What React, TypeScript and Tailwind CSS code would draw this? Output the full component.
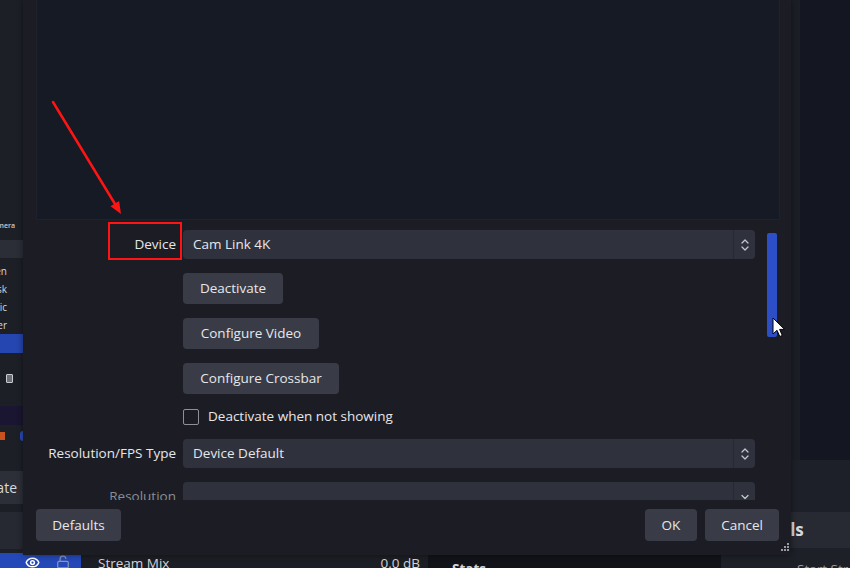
import React from 'react';
import { Eye, LockOpen } from 'lucide-react';

// OBS "Properties for Video Capture Device" dialog over the main window

const UpDown = () => (
  <svg width="10" height="16" viewBox="0 0 10 16" fill="none" stroke="#c4c6cd" strokeWidth="1.3" strokeLinecap="round" strokeLinejoin="round">
    <path d="M2 6 L5 3 L8 6" />
    <path d="M2 10 L5 13 L8 10" />
  </svg>
);

const Down = () => (
  <svg width="10" height="8" viewBox="0 0 10 8" fill="none" stroke="#c4c6cd" strokeWidth="1.3" strokeLinecap="round" strokeLinejoin="round">
    <path d="M2 2.5 L5 5.5 L8 2.5" />
  </svg>
);

const Select = ({ value, down }: { value?: string; down?: boolean }) => (
  <div className="flex h-[29px] w-[572px] shrink-0 rounded-[4px] bg-[#2f323c]">
    <div className="flex flex-1 items-center pl-[10px] text-[13.5px] text-[#e6e7eb]">{value}</div>
    <div className="flex w-[22px] items-center justify-center border-l border-[#272931]">
      {down ? <Down /> : <UpDown />}
    </div>
  </div>
);

const Btn = ({ children, w, h = 'h-[31px]' }: { children: React.ReactNode; w: string; h?: string }) => (
  <div className={`flex ${h} ${w} shrink-0 items-center justify-center rounded-[4px] bg-[#393c47] text-[13.5px] text-[#e6e7eb]`}>
    {children}
  </div>
);

const Row = ({ label, dim, children }: { label?: string; dim?: boolean; children: React.ReactNode }) => (
  <div className="flex items-center">
    <div className={`w-[140px] shrink-0 text-right text-[13.5px] ${dim ? 'text-[#8a8d96]' : 'text-[#e6e7eb]'}`}>{label}</div>
    <div className="ml-[7px] flex">{children}</div>
  </div>
);

const Clip = ({ text }: { text: string }) => (
  <div className="flex justify-end overflow-hidden pr-[16px]">
    <span className="whitespace-nowrap">{text}</span>
  </div>
);

export default function App() {
  return (
    <div className="relative h-[568px] w-[850px] overflow-hidden bg-[#1b1d24] font-['Open_Sans','Noto_Sans',sans-serif]">
      {/* main window behind the dialog */}
      <div className="flex h-full flex-col">
        <div className="flex h-[553px]">
          <div className="flex w-[23px] shrink-0 flex-col bg-[#1d1f27]">
            <div className="h-[212px]" />
            <div className="flex h-[28px] items-center justify-end overflow-hidden pr-[8px]">
              <span className="whitespace-nowrap text-[7px] font-semibold text-[#c9cbd1]">Camera</span>
            </div>
            <div className="h-[18px] bg-[#2b2e37]" />
            <div className="mt-[4px] flex flex-col text-[10px] leading-[18px] text-[#d4d6db]">
              <Clip text="Screen" />
              <Clip text="Desk" />
              <Clip text="Mic" />
              <Clip text="Timer" />
            </div>
            <div className="h-[19px] bg-[#2546b0]" />
            <div className="mt-[18px] flex h-[14px] items-center justify-end pr-[10px]">
              <div className="h-[9px] w-[7px] rounded-[1px] border border-[#c9cbd1] bg-[#6c6f78]" />
            </div>
            <div className="mt-[21px] h-[19px] bg-[#1a1530]" />
            <div className="mt-[5px] flex h-[12px] items-center justify-between">
              <div className="h-[8px] w-[5px] bg-[#c8521c]" />
              <div className="h-[10px] w-[3px] rounded-l-full bg-[#2a4bb5]" />
            </div>
            <div className="mt-[29px] flex h-[33px] items-center justify-end overflow-hidden bg-[#2c2f38]">
              <span className="whitespace-nowrap pr-[6px] text-[14px] text-[#d8d9de]">Deactivate</span>
            </div>
            <div className="mt-[8px] h-[37px] bg-[#262932]" />
          </div>

          <div className="flex-1 bg-[#161a24]" />

          <div className="flex w-[129px] shrink-0 flex-col">
            <div className="flex h-[460px]">
              <div className="w-[70px] bg-[#1d1f27]" />
              <div className="w-[9px] bg-[#1c1e26]" />
              <div className="flex-1 bg-[#141721]" />
            </div>
            <div className="h-[52px] bg-[#1e2029]" />
            <div className="flex h-[36px] items-center bg-[#272a33] pl-[11px]">
              <span className="text-[17px] font-bold text-[#d6d8dd]">Controls</span>
            </div>
            <div className="flex-1 bg-[#1e2029]" />
          </div>
        </div>

        <div className="flex h-[15px] text-[13.5px] leading-[15px]">
          <div className="flex w-[81px] shrink-0 items-start gap-[16px] bg-[#2448b7] pl-[25px] pt-[2px]">
            <Eye size={15} color="#ffffff" strokeWidth={2.4} />
            <LockOpen size={14} color="#8e96b8" strokeWidth={2} />
          </div>
          <div className="w-[9px] shrink-0 bg-[#1b1d24]" />
          <div className="flex w-[338px] shrink-0 bg-[#1c1e25] pl-[8px] pr-[8px] pt-[3px] text-[#d2d4d9]">
            <span>Stream Mix</span>
            <span className="ml-auto">0.0 dB</span>
          </div>
          <div className="w-[293px] shrink-0 bg-[#121319] pl-[24px] pt-[9px] font-bold text-[#d2d4d9]">Stats</div>
          <div className="min-w-0 flex-1 overflow-hidden whitespace-nowrap bg-[#1e2028] pl-[76px] pt-[9px] text-[#9a9ca3]">Start Streaming</div>
        </div>
      </div>

      {/* dialog window */}
      <div className="absolute left-[23px] top-0 flex h-[555px] w-[768px] flex-col bg-[#1c1d24] shadow-[0_0_6px_rgba(0,0,0,0.45)]">
        <div className="ml-[13px] mr-[11px] h-[220px] border-x border-b border-[#1f222c] bg-[#161a24]" />

        <div className="mt-[2px] flex h-[278px] overflow-hidden">
          <div className="flex flex-col gap-[14px] pl-[13px] pt-[8px]">
            <Row label="Device">
              <Select value="Cam Link 4K" />
            </Row>
            <Row>
              <Btn w="w-[100px]">Deactivate</Btn>
            </Row>
            <Row>
              <Btn w="w-[136px]">Configure Video</Btn>
            </Row>
            <Row>
              <Btn w="w-[156px]">Configure Crossbar</Btn>
            </Row>
            <Row>
              <div className="flex h-[17px] items-center">
                <div className="h-[16px] w-[16px] rounded-[2px] border-[1.5px] border-[#8e9099]" />
                <span className="ml-[9px] text-[13.5px] text-[#e6e7eb]">Deactivate when not showing</span>
              </div>
            </Row>
            <Row label="Resolution/FPS Type">
              <Select value="Device Default" />
            </Row>
            <Row label="Resolution" dim>
              <Select down />
            </Row>
          </div>
          <div className="ml-[10px] w-[14px] pt-[11px]">
            <div className="mx-[2px] h-[104px] rounded-[2px] bg-[#2c4ec6]" />
          </div>
        </div>

        <div className="mt-[9px] flex items-center pl-[13px] pr-[12px]">
          <Btn w="w-[85px]" h="h-[32px]">Defaults</Btn>
          <div className="flex-1" />
          <Btn w="w-[52px]" h="h-[32px]">OK</Btn>
          <div className="w-[8px]" />
          <Btn w="w-[74px]" h="h-[32px]">Cancel</Btn>
        </div>

        <div className="flex flex-1 items-end justify-end pb-[4px] pr-[2px]">
          <svg width="8" height="8" viewBox="0 0 8 8" fill="#9a9ca4">
            <rect x="6" y="0" width="2" height="2" />
            <rect x="3" y="3" width="2" height="2" />
            <rect x="6" y="3" width="2" height="2" />
            <rect x="0" y="6" width="2" height="2" />
            <rect x="3" y="6" width="2" height="2" />
            <rect x="6" y="6" width="2" height="2" />
          </svg>
        </div>
      </div>

      {/* red annotation box around the Device label */}
      <div className="absolute left-[108px] top-[222px] h-[38px] w-[74px] border-2 border-[#ff1414]" />

      {/* red arrow + mouse cursor */}
      <svg className="pointer-events-none absolute left-0 top-0" width="850" height="568" viewBox="0 0 850 568">
        <line x1="53" y1="102" x2="115" y2="204" stroke="#ff1414" strokeWidth="2.5" strokeLinecap="round" />
        <polygon points="121,214 110.5,206.3 119.1,201.1" fill="#ff1414" />
        <g transform="translate(773 318)">
          <path d="M0 0 L0 16 L4 12.3 L6.8 18.5 L9.3 17.4 L6.6 11.4 L11.6 11.4 Z" fill="#ffffff" stroke="#000000" strokeWidth="1" strokeLinejoin="round" />
        </g>
      </svg>
    </div>
  );
}
